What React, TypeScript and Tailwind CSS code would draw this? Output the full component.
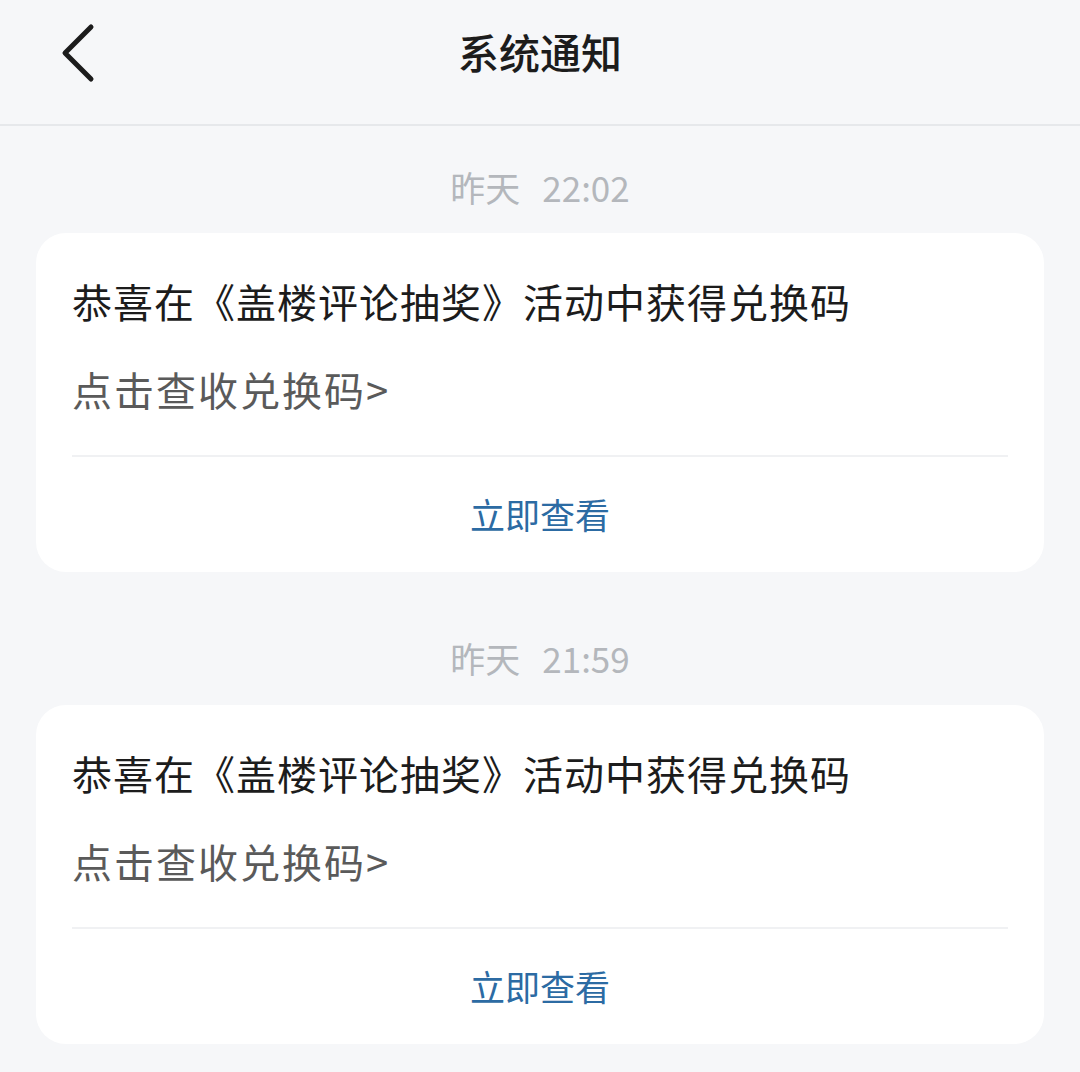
import React from "react";

const items = [
  { time: "22:02" },
  { time: "21:59" },
];

function Card() {
  return (
    <div className="mx-[36px] bg-white rounded-[30px] px-[36px]">
      <div className="pt-[40px] text-[40px] leading-[56px] text-[#1c1c1c] tracking-[1px]">
        恭喜在《盖楼评论抽奖》活动中获得兑换码
      </div>
      <div className="mt-[32px] text-[40px] leading-[56px] text-[#5a5a5a] tracking-[2px]">
        点击查收兑换码&gt;
      </div>
      <div className="mt-[38px] h-[2px] bg-[#f0f1f3]" />
      <div className="h-[115px] flex items-center justify-center text-[35px] text-[#2c6ba3]">
        立即查看
      </div>
    </div>
  );
}

export default function App() {
  return (
    <div
      className="w-[1080px] min-h-[1072px] bg-[#f6f7f9] overflow-hidden"
      style={{ fontFamily: '"Noto Sans CJK SC", "Noto Sans", sans-serif' }}
    >
      <div className="h-[126px] border-b-2 border-[#e6e8eb] relative">
        <div className="h-[104px] flex items-center justify-center">
          <span className="text-[41px] font-medium text-[#1c1c1c]">系统通知</span>
        </div>
        <svg
          className="absolute left-[56px] top-[20px]"
          width="44"
          height="66"
          viewBox="0 0 44 66"
          fill="none"
        >
          <path
            d="M35 7 L9 33 L35 59"
            stroke="#1c1c1c"
            strokeWidth="5"
            strokeLinecap="round"
            strokeLinejoin="round"
          />
        </svg>
      </div>
      {items.map((it, i) => (
        <div key={i} className={i === 0 ? "pt-[38px]" : "pt-[63px]"}>
          <div className="h-[46px] flex items-center justify-center gap-[22px] text-[35px] text-[#b4b7bc]">
            <span>昨天</span>
            <span>{it.time}</span>
          </div>
          <div className={i === 0 ? "h-[23px]" : "h-[24px]"} />
          <Card />
        </div>
      ))}
    </div>
  );
}
